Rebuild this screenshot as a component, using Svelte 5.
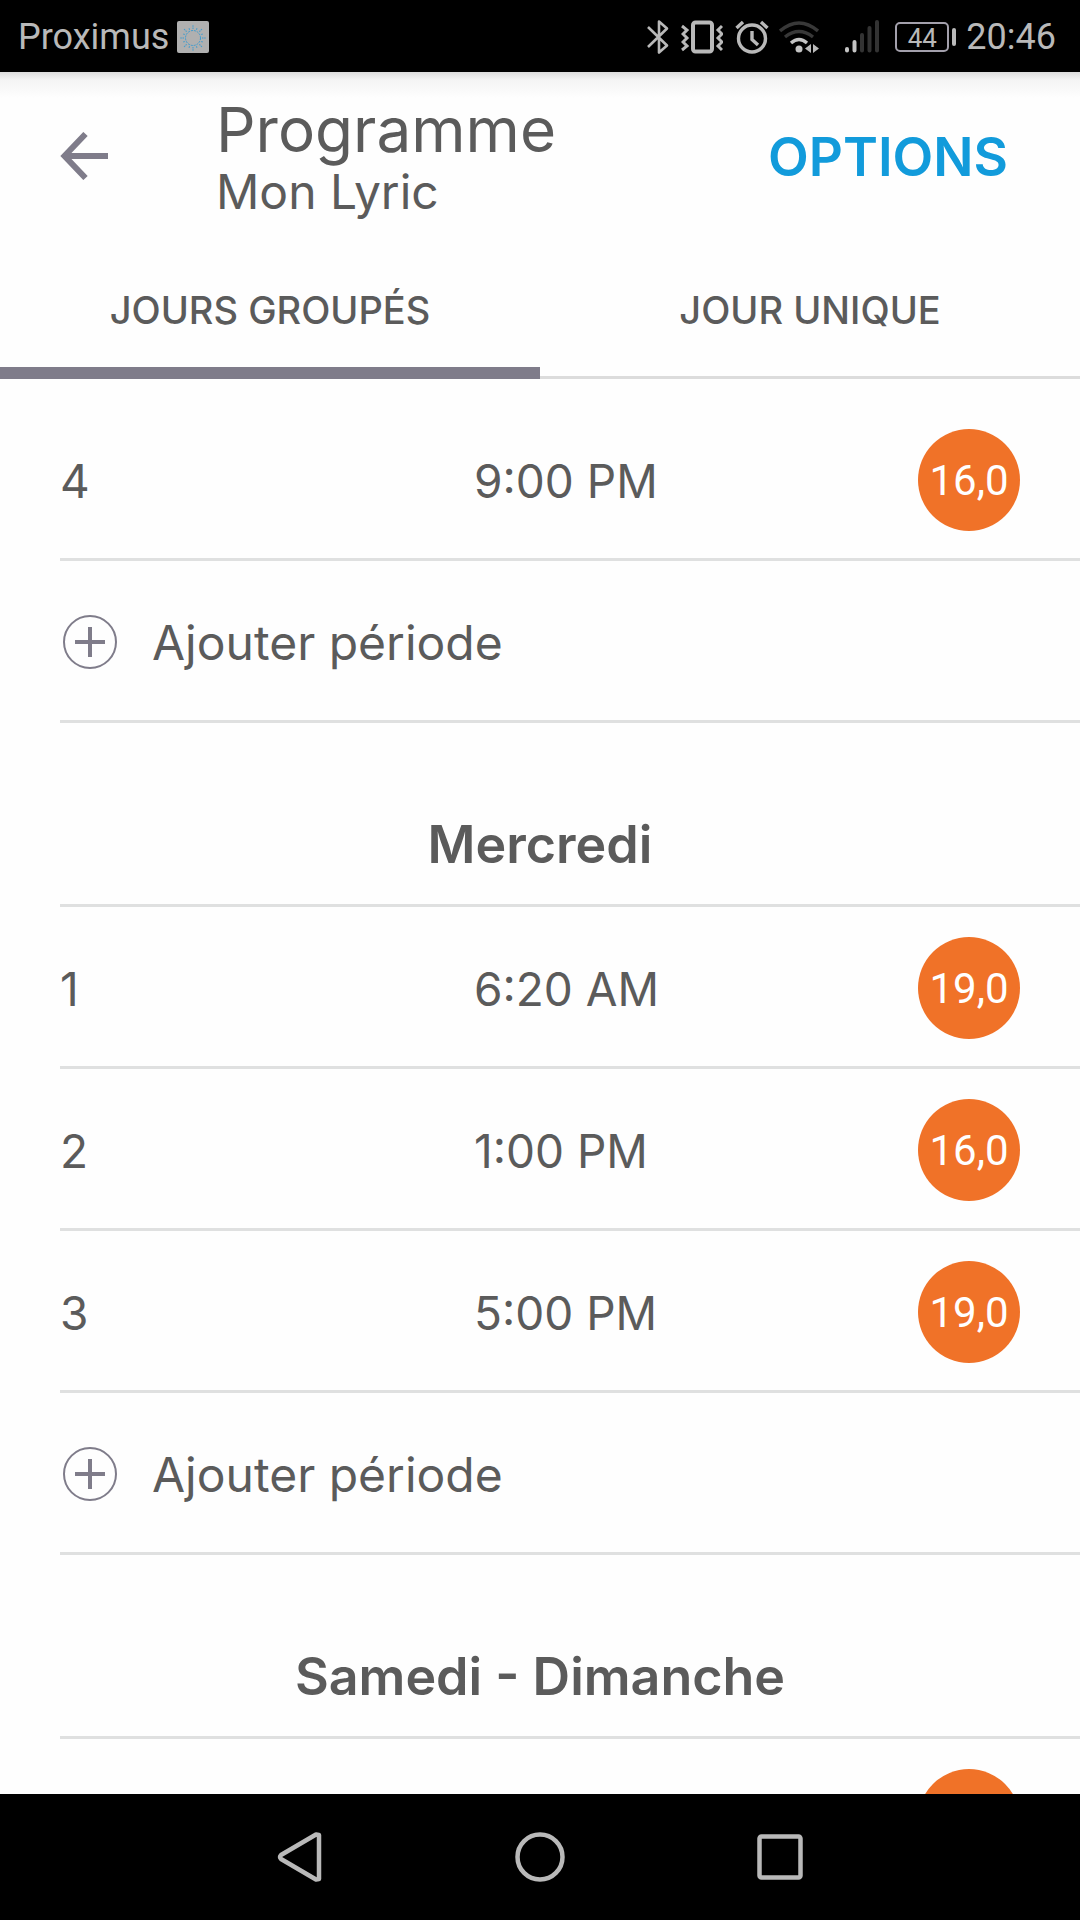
<script>
  const sections = [
    {
      id: 'mardi',
      title: '',
      loaded: true,
      periods: [{ number: 4, time: '9:00 PM', temperature: '16,0' }]
    },
    {
      id: 'mercredi',
      title: 'Mercredi',
      loaded: true,
      periods: [
        { number: 1, time: '6:20 AM', temperature: '19,0' },
        { number: 2, time: '1:00 PM', temperature: '16,0' },
        { number: 3, time: '5:00 PM', temperature: '19,0' }
      ]
    },
    {
      id: 'weekend',
      title: 'Samedi - Dimanche',
      loaded: false,
      periods: [{ number: '', time: '', temperature: '' }]
    }
  ];

  const tabs = ['JOURS GROUPÉS', 'JOUR UNIQUE'];
  const rays = Array.from({ length: 16 }, (_, i) => i * 22.5);

  let activeTab = $state(0);
</script>

<div class="screen">
  <div class="status-bar">
    <div class="carrier">
      <span>Proximus</span>
      <svg width="32" height="32" viewBox="0 0 32 32" aria-hidden="true">
        <rect width="32" height="32" rx="2" fill="#b0b0b0" />
        <circle cx="16" cy="17" r="7.5" fill="none" stroke="#3a9bd0" stroke-width="1" stroke-dasharray="2 1" />
        {#each rays as angle, i}
          <path
            d={i % 2 ? 'M16 8V6' : 'M16 8V4'}
            transform="rotate({angle} 16 17)"
            stroke="#3a9bd0"
            stroke-width="1"
            stroke-dasharray="1.5 0.7"
          />
        {/each}
      </svg>
    </div>

    <div class="indicators">
      <!-- bluetooth -->
      <svg width="22" height="36" viewBox="0 0 22 36" fill="none" stroke="#b9b9b9" stroke-width="2.6" stroke-linejoin="round" aria-hidden="true">
        <path d="M1 8L20 26.5L12 33.5V2.5L20 9.5L1 28" />
      </svg>
      <!-- vibrate -->
      <svg class="vibrate" width="42" height="36" viewBox="0 0 42 36" fill="none" stroke="#b9b9b9" aria-hidden="true">
        <rect x="12" y="3.5" width="19" height="29" rx="2.5" stroke-width="4" />
        <path d="M1 7L6 11L2 15L6 19L2 23L6 27L1 31M41 7L37 11L41 15L37 19L41 23L37 27L41 31" stroke-width="3" />
      </svg>
      <!-- alarm -->
      <svg class="alarm" width="34" height="36" viewBox="0 0 34 36" fill="none" stroke="#b9b9b9" stroke-width="3.4" aria-hidden="true">
        <circle cx="17" cy="19.5" r="13.5" />
        <path d="M17 12V20.5L23 26" />
        <path d="M1.500 9L8 3M32.5 9L26 3" />
      </svg>
      <!-- wifi -->
      <svg class="wifi" width="40" height="36" viewBox="0 0 40 36" fill="none" stroke-width="3.4" aria-hidden="true">
        <path d="M1 12Q20 -4 39 12M6 18Q20 7 34 18" stroke="#383838" />
        <path d="M12 24Q20 17 28 24" stroke="#c4c4c4" />
        <circle cx="20" cy="30" r="3.500" fill="#c4c4c4" />
        <path d="M32 25V34L26 29.5ZM34 25V34L40 29.5Z" fill="#b9b9b9" />
      </svg>
      <!-- mobile signal -->
      <svg class="signal" width="36" height="36" viewBox="0 0 36 36" stroke-width="4" stroke-linecap="round" aria-hidden="true">
        <path d="M3 30V31.5M10.5 23V31.5" stroke="#c4c4c4" />
        <path d="M18 16V31.5M25.5 9V31.5M33 3V31.5" stroke="#333" />
      </svg>
      <div class="battery">44</div>
      <span>20:46</span>
    </div>
  </div>

  <header>
    <div class="title-bar">
      <button aria-label="Retour">
        <svg width="48" height="48" viewBox="0 0 48 48" fill="none" stroke="#7f7c8a" stroke-width="6" aria-hidden="true">
          <path d="M48 24H5M25.5 2L4.5 24L25.5 46" />
        </svg>
      </button>
      <div class="titles">
        <h1>Programme</h1>
        <p>Mon Lyric</p>
      </div>
      <button class="options">OPTIONS</button>
    </div>

    <div class="tabs" role="tablist">
      {#each tabs as tab, i}
        <button
          role="tab"
          aria-selected={activeTab === i}
          class:active={activeTab === i}
          onclick={() => (activeTab = i)}
        >
          {tab}
        </button>
      {/each}
    </div>
  </header>

  <main>
    {#each sections as section (section.id)}
      <section>
        {#if section.title}
          <h2>{section.title}</h2>
        {/if}
        {#each section.periods as period}
          <div class="row">
            <span>{period.number}</span>
            <span>{period.time}</span>
            <span class="temperature">{period.temperature}</span>
          </div>
        {/each}
        {#if section.loaded}
          <button class="row add">
            <svg width="54" height="54" viewBox="0 0 54 54" fill="none" stroke="#7f7c8a" aria-hidden="true">
              <circle cx="27" cy="27" r="26" stroke-width="2" />
              <path d="M27 12V42M12 27H42" stroke-width="4" />
            </svg>
            <span>Ajouter période</span>
          </button>
        {/if}
      </section>
    {/each}
  </main>

  <nav>
    <button aria-label="Précédent">
      <svg width="54" height="54" viewBox="0 0 54 54" aria-hidden="true">
        <path d="M46 5V49L43 49.5L8 29Q6 27 8 25L43 4.5Z" />
      </svg>
    </button>
    <button aria-label="Accueil">
      <svg width="54" height="54" viewBox="0 0 54 54" aria-hidden="true">
        <circle cx="27" cy="27" r="22.5" />
      </svg>
    </button>
    <button aria-label="Applications récentes">
      <svg width="54" height="54" viewBox="0 0 54 54" aria-hidden="true">
        <rect x="6.5" y="6.5" width="41" height="41" rx="2" />
      </svg>
    </button>
  </nav>
</div>

<style>
  :global(body) {
    background: #fefefe;
  }

  .screen {
    height: 100vh;
    display: flex;
    flex-direction: column;
    overflow: hidden;
    font-family: Inter, 'Liberation Sans', sans-serif;
    color: #5b5b5b;
  }

  button {
    margin: 0;
    padding: 0;
    border: 0;
    background: none;
    font: inherit;
    color: inherit;
    cursor: pointer;
  }

  svg {
    display: block;
    flex-shrink: 0;
  }

  /* System status bar */
  .status-bar {
    flex-shrink: 0;
    box-sizing: border-box;
    height: 72px;
    padding: 2px 24px 0 18px;
    display: flex;
    align-items: center;
    justify-content: space-between;
    background: #000;
    color: #b9b9b9;
    font-family: Roboto, sans-serif;
    font-size: 36px;
  }

  .carrier,
  .indicators {
    display: flex;
    align-items: center;
  }

  .carrier {
    gap: 8px;
  }

  .vibrate,
  .alarm {
    margin-left: 12px;
  }

  .wifi {
    margin-left: 10px;
  }

  .signal {
    margin-left: 25px;
  }

  .battery {
    position: relative;
    box-sizing: border-box;
    width: 54px;
    height: 30px;
    margin: 0 17px 0 15px;
    border: 2px solid #a3a0ac;
    border-radius: 5px;
    font-size: 26px;
    line-height: 28px;
    text-align: center;
  }

  .battery::after {
    content: '';
    position: absolute;
    top: 4px;
    right: -9px;
    width: 4px;
    height: 18px;
    border-radius: 2px;
    background: #b9b9b9;
  }

  /* App header */
  header {
    flex-shrink: 0;
    background: linear-gradient(#dcdcdc, #f4f4f4 8px, #fefefe 26px);
  }

  .title-bar {
    display: flex;
    align-items: center;
    height: 168px;
    padding: 0 72px 0 60px;
  }

  .titles {
    flex: 1;
    margin-left: 108px;
    padding-top: 4px;
  }

  h1,
  h2,
  p {
    margin: 0;
    font-weight: 400;
  }

  h1 {
    font-size: 62px;
    line-height: 68px;
  }

  p {
    font-size: 48px;
    line-height: 56px;
  }

  .options {
    padding-top: 2px;
    font-size: 53px;
    font-weight: 600;
    color: #129bdb;
  }

  .tabs {
    display: grid;
    grid-template-columns: 1fr 1fr;
  }

  .tabs button {
    height: 139px;
    padding-top: 3px;
    border-bottom: 3px solid #dcdcdc;
    font-size: 38px;
    font-weight: 500;
  }

  .tabs button.active {
    padding-top: 12px;
    border-bottom: 12px solid #7f7c8a;
  }

  /* Schedule */
  main {
    flex: 1;
    min-height: 0;
    padding: 20px 0 0 60px;
    overflow: hidden;
  }

  h2 {
    padding: 92px 60px 29px 0;
    border-bottom: 3px solid #dfe0e0;
    font-size: 52px;
    font-weight: 600;
    line-height: 60px;
    text-align: center;
  }

  .row {
    display: grid;
    grid-template-columns: 414px 1fr auto;
    align-items: center;
    padding: 30px 60px 27px 0;
    border-bottom: 3px solid #dfe0e0;
    font-size: 46px;
    line-height: 104px;
  }

  .row span {
    height: 102px;
  }

  .temperature {
    width: 102px;
    border-radius: 50%;
    background: #f07228;
    color: #fff;
    font-family: Roboto, sans-serif;
    font-size: 42px;
    text-align: center;
  }

  .add {
    display: flex;
    gap: 35px;
    width: 100%;
    padding-left: 3px;
    font-size: 48px;
  }

  /* System navigation */
  nav {
    flex-shrink: 0;
    display: flex;
    justify-content: center;
    align-items: center;
    gap: 186px;
    height: 126px;
    background: #000;
  }

  nav svg {
    fill: none;
    stroke: #b9b9b9;
    stroke-width: 4.5;
    stroke-linejoin: round;
  }
</style>
